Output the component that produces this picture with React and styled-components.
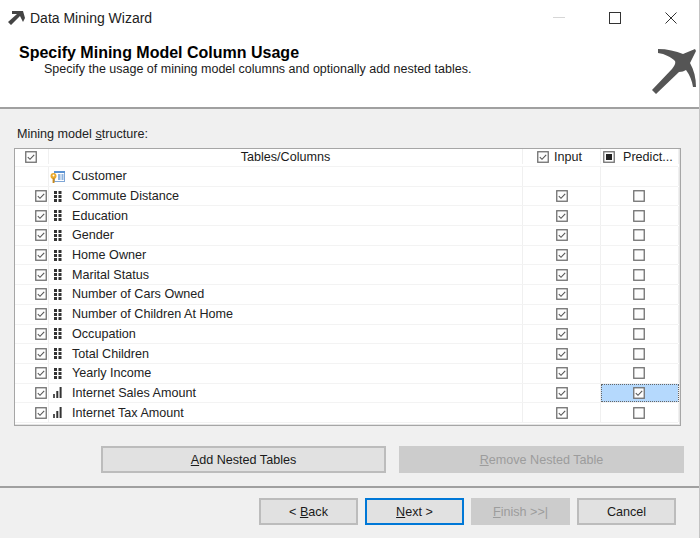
import React from "react";
import styled, { createGlobalStyle } from "styled-components";

const columns = [
  { name: "Commute Distance", kind: "attr" },
  { name: "Education", kind: "attr" },
  { name: "Gender", kind: "attr" },
  { name: "Home Owner", kind: "attr" },
  { name: "Marital Status", kind: "attr" },
  { name: "Number of Cars Owned", kind: "attr" },
  { name: "Number of Children At Home", kind: "attr" },
  { name: "Occupation", kind: "attr" },
  { name: "Total Children", kind: "attr" },
  { name: "Yearly Income", kind: "attr" },
  { name: "Internet Sales Amount", kind: "measure", predict: true },
  { name: "Internet Tax Amount", kind: "measure" },
];

const GlobalStyle = createGlobalStyle`
  html, body {
    margin: 0;
    padding: 0;
    background: #f0f0f0;
  }
  * {
    box-sizing: border-box;
  }
`;

const Wizard = styled.div`
  width: 700px;
  height: 538px;
  overflow: hidden;
  display: flex;
  flex-direction: column;
  background: #f0f0f0;
  border-right: 1px solid #c4c4c4;
  color: #1a1a1a;
  font-family: "Liberation Sans", Arial, sans-serif;
  font-size: 12.6px;
`;

const TitleBar = styled.div`
  height: 38px;
  flex: none;
  display: flex;
  align-items: center;
  padding: 0 0 2px 8px;
  background: #fff;
`;

const TitleText = styled.span`
  margin-left: 4px;
  font-size: 14px;
  color: #222;
`;

const WindowButtons = styled.div`
  margin-left: auto;
  display: flex;
  align-items: center;
`;

const WindowButton = styled.span`
  width: 56px;
  height: 20px;
  display: flex;
  align-items: center;
  justify-content: center;
`;

const Banner = styled.header`
  height: 71px;
  flex: none;
  display: flex;
  justify-content: space-between;
  background: #fff;
  border-bottom: 2px solid #a0a0a0;
  padding: 6px 1px 0 19px;
`;

const BannerTitle = styled.h1`
  margin: 0 0 1px;
  font-size: 16px;
  line-height: 17px;
  font-weight: 700;
  color: #000;
`;

const BannerSub = styled.p`
  margin: 0 0 0 25px;
  font-size: 12.5px;
  line-height: 15px;
  color: #1a1a1a;
`;

const BannerIcon = styled.svg`
  width: 48px;
  height: 48px;
  flex: none;
  margin-top: 4px;
`;

const Body = styled.main`
  flex: none;
  display: flex;
  flex-direction: column;
  padding: 18px 17px 0 14px;
`;

const SectionLabel = styled.div`
  margin: 0 0 6px 3px;
  line-height: 15px;
  color: #222;
`;

const Key = styled.span`
  text-decoration: underline;
  text-underline-offset: 1px;
`;

const Grid = styled.div`
  width: 667px;
  height: 278px;
  padding: 0 2px 0 0;
  background: #fff;
  border: 1px solid #a6a6a6;
  box-shadow: inset -1px -1px 0 #e4e4e4;
`;

const Row = styled.div`
  display: grid;
  grid-template-columns: 34px 474px 78px 78px;
  height: ${(p) => (p.$header ? "18px" : "19.7px")};
  padding-bottom: ${(p) => (p.$header ? "2px" : "0")};
  border-bottom: 1px solid #f3f3f3;
`;

const Cell = styled.div`
  display: flex;
  align-items: center;
  justify-content: ${(p) => p.$align || "center"};
  min-width: 0;
  border-right: 1px solid #f0f0f0;
  padding-left: ${(p) => p.$indent || 0}px;
  padding-right: ${(p) => p.$trail || 0}px;
  background: ${(p) => (p.$active ? "#b5d9fd" : "transparent")};
  outline: ${(p) => (p.$active ? "1px dotted #666" : "none")};
  outline-offset: -1px;
`;

const IconSlot = styled.span`
  width: 15px;
  height: 15px;
  flex: none;
  display: flex;
  align-items: center;
  justify-content: center;
`;

const ColumnName = styled.span`
  margin-left: 7px;
  white-space: nowrap;
  color: #222;
`;

const HeaderLabel = styled.span`
  margin-left: ${(p) => p.$gap}px;
  white-space: nowrap;
  color: #222;
`;

const BoxMark = styled.svg`
  width: 12px;
  height: 12px;
  flex: none;
  display: block;
`;

const ButtonRow = styled.div`
  display: flex;
  gap: 13px;
  margin: 20px 0 0 87px;
`;

const Divider = styled.hr`
  width: 100%;
  height: 2px;
  flex: none;
  margin: 13px 0 0;
  border: 0;
  background: #a0a0a0;
`;

const Footer = styled.footer`
  display: flex;
  justify-content: flex-end;
  gap: 7px;
  padding: 10px 23px 0 0;
`;

const Button = styled.button`
  width: ${(p) => p.$width}px;
  height: 27px;
  flex: none;
  padding: 0;
  border: 2px solid ${(p) => (p.$focus ? "#0078d7" : p.disabled ? "#cccccc" : "#bcbcbc")};
  background: ${(p) => (p.disabled ? "#cccccc" : "#e1e1e1")};
  color: ${(p) => (p.disabled ? "#9c9c9c" : "#1a1a1a")};
  font-family: inherit;
  font-size: 12.6px;
`;

function CheckBox({ state }) {
  return (
    <BoxMark viewBox="0 0 12 12">
      <rect x="0.75" y="0.75" width="10.5" height="10.5" fill="#fdfdfd" stroke="#707070" strokeWidth="1.3" />
      {state === "checked" && (
        <path d="M2.8 6.2 L5 8.3 L9.2 3.8" fill="none" stroke="#555" strokeWidth="1.1" />
      )}
      {state === "mixed" && <rect x="3" y="3" width="6" height="6" fill="#222" />}
    </BoxMark>
  );
}

function AttributeIcon() {
  return (
    <svg width="8" height="11" viewBox="0 0 8 11">
      {[0, 4, 8].map((y) => (
        <g key={y} fill="#333">
          <rect x="0" y={y} width="3" height="3" />
          <rect x="4.5" y={y} width="3" height="3" />
        </g>
      ))}
    </svg>
  );
}

function MeasureIcon() {
  return (
    <svg width="9" height="11" viewBox="0 0 9 11">
      <rect x="0" y="7" width="2" height="4" fill="#555" />
      <rect x="3.3" y="4" width="2" height="7" fill="#333" />
      <rect x="6.6" y="0" width="2" height="11" fill="#333" />
    </svg>
  );
}

function TableIcon() {
  return (
    <svg width="15" height="15" viewBox="0 0 15 15">
      <rect x="4.5" y="2.5" width="10" height="10" fill="#fff" stroke="#7fa6d6" />
      <rect x="4" y="2" width="11" height="2" fill="#5b93d3" />
      <rect x="8" y="5" width="2.5" height="6" fill="#8fb4de" />
      <rect x="11.5" y="5" width="2" height="6" fill="#8fb4de" />
      <circle cx="3.5" cy="7" r="3" fill="#e9a92a" />
      <circle cx="3.5" cy="6.4" r="1" fill="#fff" />
      <rect x="2.6" y="9" width="1.9" height="5" fill="#c98a1c" />
    </svg>
  );
}

export default function App() {
  return (
    <Wizard>
      <GlobalStyle />
      <TitleBar>
        <svg width="18" height="16" viewBox="0 0 18 16">
          <path d="M4 1 L15 1 L17 8 L15 12 L12 6 L3 15 L0 12 L9 4 L4 4 Z" fill="#444" />
        </svg>
        <TitleText>Data Mining Wizard</TitleText>
        <WindowButtons>
          <WindowButton>
            <svg width="12" height="2" viewBox="0 0 12 2">
              <rect width="12" height="1" fill="#d6d6d6" />
            </svg>
          </WindowButton>
          <WindowButton>
            <svg width="12" height="12" viewBox="0 0 12 12">
              <rect x="0.5" y="0.5" width="11" height="11" fill="none" stroke="#333" />
            </svg>
          </WindowButton>
          <WindowButton>
            <svg width="12" height="12" viewBox="0 0 12 12">
              <path d="M0.5 0.5 L11.5 11.5 M11.5 0.5 L0.5 11.5" stroke="#333" />
            </svg>
          </WindowButton>
        </WindowButtons>
      </TitleBar>
      <Banner>
        <div>
          <BannerTitle>Specify Mining Model Column Usage</BannerTitle>
          <BannerSub>Specify the usage of mining model columns and optionally add nested tables.</BannerSub>
        </div>
        <BannerIcon viewBox="0 0 48 48">
          <path
            d="M8 1 C17 1 26 3 33 6 L45 1 L46 3 L40 15 C44 22 46 30 46 39 L43 39 C42 33 40 27 36 22 C34 23 32 24 29 24 L6 46 L2 42 L22 21 C24 18 26 16 25 13 C21 9 15 6 8 5 Z"
            fill="#555"
          />
        </BannerIcon>
      </Banner>
      <Body>
        <SectionLabel>
          Mining model <Key>s</Key>tructure:
        </SectionLabel>
        <Grid>
          <Row $header>
            <Cell $trail={1}>
              <CheckBox state="checked" />
            </Cell>
            <Cell>Tables/Columns</Cell>
            <Cell $align="flex-start" $indent={14}>
              <CheckBox state="checked" />
              <HeaderLabel $gap={5}>Input</HeaderLabel>
            </Cell>
            <Cell $align="flex-start" $indent={2}>
              <CheckBox state="mixed" />
              <HeaderLabel $gap={8}>Predict...</HeaderLabel>
            </Cell>
          </Row>
          <Row>
            <Cell />
            <Cell $align="flex-start" $indent={1}>
              <IconSlot>
                <TableIcon />
              </IconSlot>
              <ColumnName>Customer</ColumnName>
            </Cell>
            <Cell />
            <Cell />
          </Row>
          {columns.map((col) => (
            <Row key={col.name}>
              <Cell $align="flex-end" $trail={1}>
                <CheckBox state="checked" />
              </Cell>
              <Cell $align="flex-start" $indent={1}>
                <IconSlot>{col.kind === "attr" ? <AttributeIcon /> : <MeasureIcon />}</IconSlot>
                <ColumnName>{col.name}</ColumnName>
              </Cell>
              <Cell>
                <CheckBox state="checked" />
              </Cell>
              <Cell $active={col.predict} $trail={1}>
                <CheckBox state={col.predict ? "checked" : "empty"} />
              </Cell>
            </Row>
          ))}
        </Grid>
        <ButtonRow>
          <Button $width={285}>
            <Key>A</Key>dd Nested Tables
          </Button>
          <Button $width={285} disabled>
            <Key>R</Key>emove Nested Table
          </Button>
        </ButtonRow>
      </Body>
      <Divider />
      <Footer>
        <Button $width={99}>
          &lt; <Key>B</Key>ack
        </Button>
        <Button $width={99} $focus>
          <Key>N</Key>ext &gt;
        </Button>
        <Button $width={99} disabled>
          <Key>F</Key>inish &gt;&gt;|
        </Button>
        <Button $width={99}>Cancel</Button>
      </Footer>
    </Wizard>
  );
}
